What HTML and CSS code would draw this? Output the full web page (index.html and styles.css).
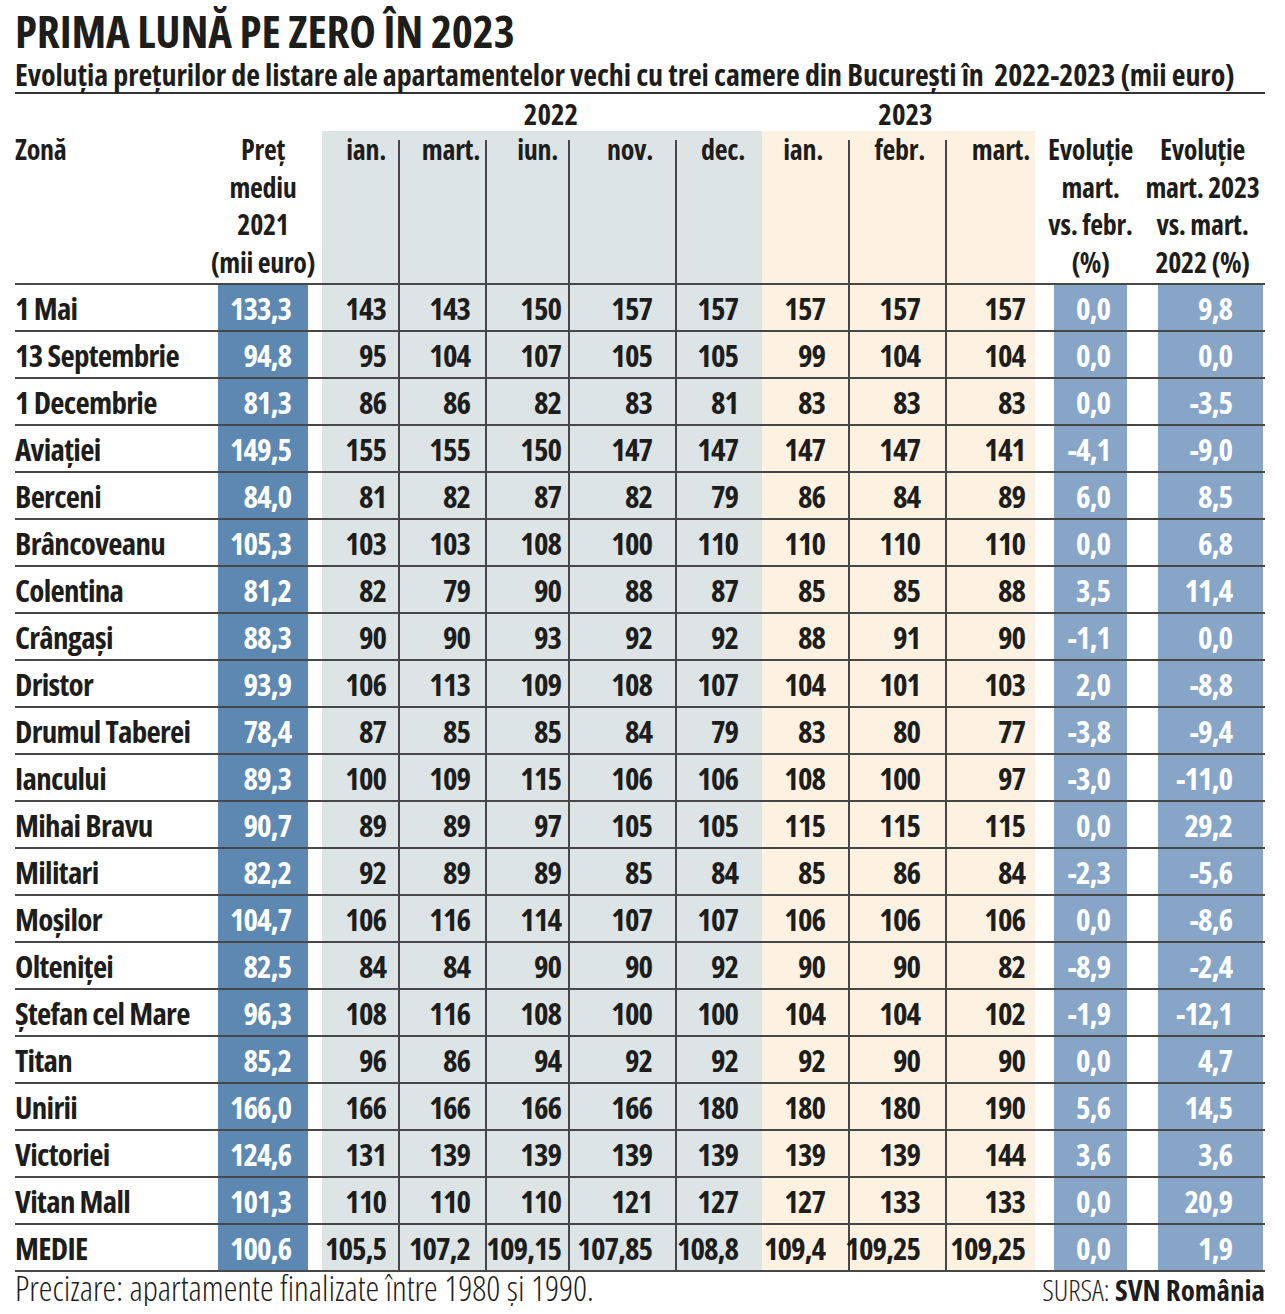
FILE: index.html
```html
<!DOCTYPE html>
<html lang="ro">
<head>
    <meta charset="UTF-8">
    <meta name="viewport" content="width=device-width, initial-scale=1.0">
    <title>Prima lună pe zero în 2023</title>
    <link rel="stylesheet" href="styles.css">
</head>
<body>
    <div class="page">
        <h1 class="title">PRIMA LUNĂ PE ZERO ÎN 2023</h1>
        <h2 class="subtitle">Evoluția prețurilor de listare ale apartamentelor vechi cu trei camere din București în&nbsp; 2022-2023 (mii euro)</h2>

        <div class="years">
            <span class="year-22">2022</span>
            <span class="year-23">2023</span>
        </div>

        <div id="table" class="table">
            <div class="row head">
                <div class="cell zone">Zonă</div>
                <div class="cell pret stack"><span>Preț</span><span>mediu</span><span>2021</span><span>(mii euro)</span></div>
                <div class="cell m22 c1">ian.</div>
                <div class="cell m22 c2 vl">mart.</div>
                <div class="cell m22 c3 vl">iun.</div>
                <div class="cell m22 c4 vl">nov.</div>
                <div class="cell m22 c5 vl">dec.</div>
                <div class="cell m23 c6">ian.</div>
                <div class="cell m23 c7 vl">febr.</div>
                <div class="cell m23 c8 vl">mart.</div>
                <div class="cell evo1 stack"><span>Evoluție</span><span>mart.</span><span>vs. febr.</span><span>(%)</span></div>
                <div class="cell evo2 stack"><span>Evoluție</span><span>mart. 2023</span><span>vs. mart.</span><span>2022 (%)</span></div>
            </div>
        </div>

        <div class="foot">
            <span class="note">Precizare: apartamente finalizate între 1980 și 1990.</span>
            <span class="source">SURSA: <b>SVN România</b></span>
        </div>
    </div>

    <script>
const rows = [
    ['1 Mai', '133,3', '143', '143', '150', '157', '157', '157', '157', '157', '0,0', '9,8'],
    ['13 Septembrie', '94,8', '95', '104', '107', '105', '105', '99', '104', '104', '0,0', '0,0'],
    ['1 Decembrie', '81,3', '86', '86', '82', '83', '81', '83', '83', '83', '0,0', '-3,5'],
    ['Aviației', '149,5', '155', '155', '150', '147', '147', '147', '147', '141', '-4,1', '-9,0'],
    ['Berceni', '84,0', '81', '82', '87', '82', '79', '86', '84', '89', '6,0', '8,5'],
    ['Brâncoveanu', '105,3', '103', '103', '108', '100', '110', '110', '110', '110', '0,0', '6,8'],
    ['Colentina', '81,2', '82', '79', '90', '88', '87', '85', '85', '88', '3,5', '11,4'],
    ['Crângași', '88,3', '90', '90', '93', '92', '92', '88', '91', '90', '-1,1', '0,0'],
    ['Dristor', '93,9', '106', '113', '109', '108', '107', '104', '101', '103', '2,0', '-8,8'],
    ['Drumul Taberei', '78,4', '87', '85', '85', '84', '79', '83', '80', '77', '-3,8', '-9,4'],
    ['Iancului', '89,3', '100', '109', '115', '106', '106', '108', '100', '97', '-3,0', '-11,0'],
    ['Mihai Bravu', '90,7', '89', '89', '97', '105', '105', '115', '115', '115', '0,0', '29,2'],
    ['Militari', '82,2', '92', '89', '89', '85', '84', '85', '86', '84', '-2,3', '-5,6'],
    ['Moșilor', '104,7', '106', '116', '114', '107', '107', '106', '106', '106', '0,0', '-8,6'],
    ['Olteniței', '82,5', '84', '84', '90', '90', '92', '90', '90', '82', '-8,9', '-2,4'],
    ['Ștefan cel Mare', '96,3', '108', '116', '108', '100', '100', '104', '104', '102', '-1,9', '-12,1'],
    ['Titan', '85,2', '96', '86', '94', '92', '92', '92', '90', '90', '0,0', '4,7'],
    ['Unirii', '166,0', '166', '166', '166', '166', '180', '180', '180', '190', '5,6', '14,5'],
    ['Victoriei', '124,6', '131', '139', '139', '139', '139', '139', '139', '144', '3,6', '3,6'],
    ['Vitan Mall', '101,3', '110', '110', '110', '121', '127', '127', '133', '133', '0,0', '20,9'],
    ['MEDIE', '100,6', '105,5', '107,2', '109,15', '107,85', '108,8', '109,4', '109,25', '109,25', '0,0', '1,9']
];

// clasele fiecarei coloane
const cols = ['zone', 'pret', 'm22 c1', 'm22 c2 vl', 'm22 c3 vl', 'm22 c4 vl', 'm22 c5 vl',
              'm23 c6', 'm23 c7 vl', 'm23 c8 vl', 'evo1', 'evo2'];

const table = document.getElementById('table');
rows.forEach(r => {
    const row = document.createElement('div');
    row.className = 'row';
    r.forEach((value, i) => {
        const cell = document.createElement('div');
        cell.className = 'cell ' + cols[i];
        cell.textContent = value;
        row.appendChild(cell);
    });
    table.appendChild(row);
});
    </script>
</body>
</html>
```
FILE: styles.css
```css
body, html {
    margin: 0;
    padding: 0;
    background: #fff;
}
body {
    font-family: "Open Sans", "Liberation Sans", sans-serif;
    font-stretch: 75%;
    color: #1d1d1b;
}
.page {
    padding: 0 20px 0 15px;
}
.title {
    margin: 0;
    padding-top: 3px;
    font-size: 45px;
    line-height: 56px;
    font-weight: 700;
    letter-spacing: -0.2px;
    white-space: nowrap;
}
.subtitle {
    margin: -1px 0 0;
    font-size: 30px;
    line-height: 34px;
    font-weight: 700;
    letter-spacing: -0.1px;
    white-space: nowrap;
    border-bottom: 2px solid #333;
}
.years,
.row {
    display: grid;
    grid-template-columns: 203px 104px 76px 87px 83px 107px 87px 86px 97px 109px 104px 105px;
}
.years {
    height: 37px;
    align-items: center;
    font-size: 29px;
    font-weight: 700;
}
.year-22 {
    grid-column: 3 / 8;
    text-align: center;
    padding-left: 18px;
}
.year-23 {
    grid-column: 8 / 11;
    text-align: center;
    padding-right: 5px;
}
.row {
    height: 47px;
    box-sizing: border-box;
    border-bottom: 2px solid #474747;
    font-size: 31px;
    font-weight: 700;
    letter-spacing: -1px;
}
.cell {
    display: flex;
    align-items: center;
    justify-content: flex-end;
    white-space: nowrap;
}
.zone {
    justify-content: flex-start;
    font-size: 31px;
    letter-spacing: -0.7px;
}
.pret {
    margin-right: 14px;
    padding-right: 17px;
    background: #5c88b2;
    color: #fff;
}
.m22 {
    background: #dce4e6;
}
.m23 {
    background: #fdf2e2;
}
.vl {
    border-left: 2px solid #474747;
}
.c1 { padding-right: 12px; }
.c2 { padding-right: 15px; }
.c3 { padding-right: 7px; }
.c4 { padding-right: 23px; }
.c5 { padding-right: 24px; }
.c6 { padding-right: 23px; }
.c7 { padding-right: 25px; }
.c8 { padding-right: 10px; margin-right: 19px; }
.evo1 {
    margin-right: 31px;
    padding-right: 17px;
    background: #87a6c7;
    color: #fff;
}
.evo2 {
    padding-right: 31px;
    background: #87a6c7;
    color: #fff;
}

/* capul de tabel */
.row.head {
    height: 154px;
    font-size: 28px;
    line-height: 37.5px;
    letter-spacing: -0.3px;
}
.head .cell {
    align-items: flex-start;
}
.head .zone {
    font-size: 28px;
    letter-spacing: -0.3px;
}
.head .pret,
.head .evo1,
.head .evo2 {
    background: none;
    color: #1d1d1b;
    padding-right: 0;
}
.head .evo2 {
    padding-right: 16px;
}
.head .stack {
    flex-direction: column;
    align-items: center;
    justify-content: flex-start;
}
.head .vl {
    border-left: none;
    background-image: linear-gradient(#474747, #474747);
    background-size: 2px calc(100% - 9px);
    background-position: left bottom;
    background-repeat: no-repeat;
}
.head .c1 { padding-right: 12px; }
.head .c2 { padding-right: 5px; }
.head .c3 { padding-right: 10px; }
.head .c4 { padding-right: 22px; }
.head .c5 { padding-right: 17px; }
.head .c6 { padding-right: 25px; }
.head .c7 { padding-right: 20px; }
.head .c8 { padding-right: 5px; }

.foot {
    display: flex;
    justify-content: space-between;
    align-items: baseline;
    line-height: 32px;
    font-weight: 400;
}
.note {
    font-size: 34.5px;
    font-weight: 300;
}
.source {
    font-size: 29px;
    font-weight: 300;
}
.source b {
    font-weight: 700;
}
```
